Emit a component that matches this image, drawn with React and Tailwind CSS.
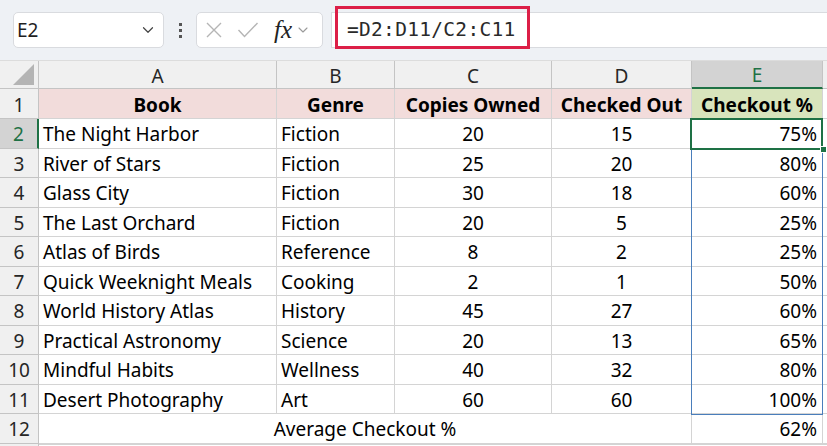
import { ChevronDown } from "lucide-react";

const rows = [
  ["The Night Harbor", "Fiction", 20, 15, "75%"],
  ["River of Stars", "Fiction", 25, 20, "80%"],
  ["Glass City", "Fiction", 30, 18, "60%"],
  ["The Last Orchard", "Fiction", 20, 5, "25%"],
  ["Atlas of Birds", "Reference", 8, 2, "25%"],
  ["Quick Weeknight Meals", "Cooking", 2, 1, "50%"],
  ["World History Atlas", "History", 45, 27, "60%"],
  ["Practical Astronomy", "Science", 20, 13, "65%"],
  ["Mindful Habits", "Wellness", 40, 32, "80%"],
  ["Desert Photography", "Art", 60, 60, "100%"],
];

const cell = "border-r border-b border-[#d4d4d4] flex items-center pt-[3px]";
const head = "border-r border-b border-[#c4c4c4] bg-[#f0f0f0] flex items-center justify-center text-[#262626] pt-[3px]";

const Toolbar = () => (
  <div className="h-[61px] bg-[#eef1f5] flex items-center pl-[13px] border-b border-[#dcdcdc]">
    {/* Name box */}
    <div className="w-[151px] h-[36px] rounded-[5px] border border-[#d9dbdf] bg-white flex items-center justify-between pl-[3px] pr-[6px]">
      <span className="text-[19px] text-[#1f1f1f]" style={{ fontFamily: '"Noto Sans", sans-serif' }}>E2</span>
      <ChevronDown className="w-[18px] h-[18px] text-[#444]" strokeWidth={1.6} />
    </div>

    {/* dots */}
    <div className="w-[32px] flex flex-col items-center gap-[3px]">
      <div className="w-[3px] h-[3px] bg-[#555]" />
      <div className="w-[3px] h-[3px] bg-[#555]" />
      <div className="w-[3px] h-[3px] bg-[#555]" />
    </div>

    {/* function box */}
    <div className="w-[127px] h-[36px] rounded-[5px] border border-[#d9dbdf] bg-white flex items-center pl-[8px] pr-[2px]">
      <svg width="18" height="18" viewBox="0 0 18 18" className="mr-[14px]">
        <path d="M2 2 L16 16 M16 2 L2 16" stroke="#b5b5b5" strokeWidth="1.4" fill="none" />
      </svg>
      <svg width="22" height="18" viewBox="0 0 22 18" className="mr-[15px]">
        <path d="M1.5 9 L7.5 15.5 L20.5 2" stroke="#b5b5b5" strokeWidth="1.4" fill="none" />
      </svg>
      <span className="text-[25px] italic text-[#222] leading-none -mt-[2px]" style={{ fontFamily: '"Liberation Serif", serif' }}>fx</span>
      <ChevronDown className="w-[16px] h-[16px] text-[#9a9a9a] ml-[3px]" strokeWidth={1.6} />
    </div>

    {/* formula bar */}
    <div className="ml-[8px] flex-1 h-[36px] bg-white border-y border-l border-[#d9dbdf] flex items-center pl-[3px]">
      <div className="h-[43px] w-[195px] -mt-[6px] border-[3px] border-[#dc1f47] flex items-center pl-[9px]">
        <span className="text-[#2a2a2a] mt-[6px]" style={{ fontFamily: '"DejaVu Sans Mono", monospace', fontSize: "19.5px", letterSpacing: "0.3px" }}>=D2:D11/C2:C11</span>
      </div>
    </div>
  </div>
);

export default function App() {
  return (
    <div className="w-[827px] h-[446px] overflow-hidden bg-white text-black" style={{ fontFamily: '"Noto Sans", sans-serif' }}>
      <Toolbar />
      <div className="relative grid grid-cols-[39px_238px_118px_157px_140px_131px_1fr] grid-rows-[28px_30px_repeat(11,29.5px)_20px] text-[19px] leading-none">
        {/* column headers */}
        <div className={head + " relative"}>
          <svg width="21" height="21" viewBox="0 0 21 21" className="absolute right-[4px] bottom-[3px]">
            <path d="M21 0 L21 21 L0 21 Z" fill="#b4b4b4" />
          </svg>
        </div>
        {["A", "B", "C", "D"].map((c) => (
          <div key={c} className={head}>{c}</div>
        ))}
        <div className="border-r border-b-2 border-b-[#1e7145] border-r-[#c4c4c4] bg-[#d3d3d3] flex items-center justify-center text-[#1e7145] pt-[3px]">E</div>
        <div className="border-b border-[#c4c4c4] bg-[#f0f0f0]" />

        {/* row 1 */}
        <div className={head}>1</div>
        {["Book", "Genre", "Copies Owned", "Checked Out"].map((h) => (
          <div key={h} className={cell + " justify-center font-bold bg-[#f2dcdb]"}>{h}</div>
        ))}
        <div className={cell + " justify-center font-bold bg-[#d8e4bc]"}>Checkout %</div>
        <div className="border-b border-[#d4d4d4]" />

        {rows.map((r, i) => (
          <div key={i} className="contents">
            <div className={i === 0 ? "border-r-2 border-r-[#1e7145] border-b border-b-[#c4c4c4] bg-[#d3d3d3] flex items-center justify-center text-[#1e7145] pt-[3px]" : head}>{i + 2}</div>
            <div className={cell + " pl-[4px]"}>{r[0]}</div>
            <div className={cell + " pl-[4px]"}>{r[1]}</div>
            <div className={cell + " justify-center"}>{r[2]}</div>
            <div className={cell + " justify-center"}>{r[3]}</div>
            <div className={cell + " justify-end pr-[5px]"}>{r[4]}</div>
            <div className="border-b border-[#d4d4d4]" />
          </div>
        ))}

        {/* row 12 */}
        <div className={head}>12</div>
        <div className={cell + " col-span-4 justify-center"}>Average Checkout %</div>
        <div className={cell + " justify-end pr-[5px]"}>62%</div>
        <div className="border-b border-[#d4d4d4]" />

        <div className={head} />
        <div className="col-span-6 border-t border-[#d4d4d4]" />

        {/* selected range E2:E11 */}
        <div className="absolute left-[691px] top-[58px] w-[132px] h-[296px] border border-[#4a7ebb] pointer-events-none" />
        {/* active cell E2 */}
        <div className="absolute left-[690px] top-[57px] w-[133px] h-[32px] border-2 border-[#1e7145] pointer-events-none" />
        <div className="absolute left-[820px] top-[85px] w-[7px] h-[7px] bg-[#1e7145] border border-white pointer-events-none" />
      </div>
    </div>
  );
}
